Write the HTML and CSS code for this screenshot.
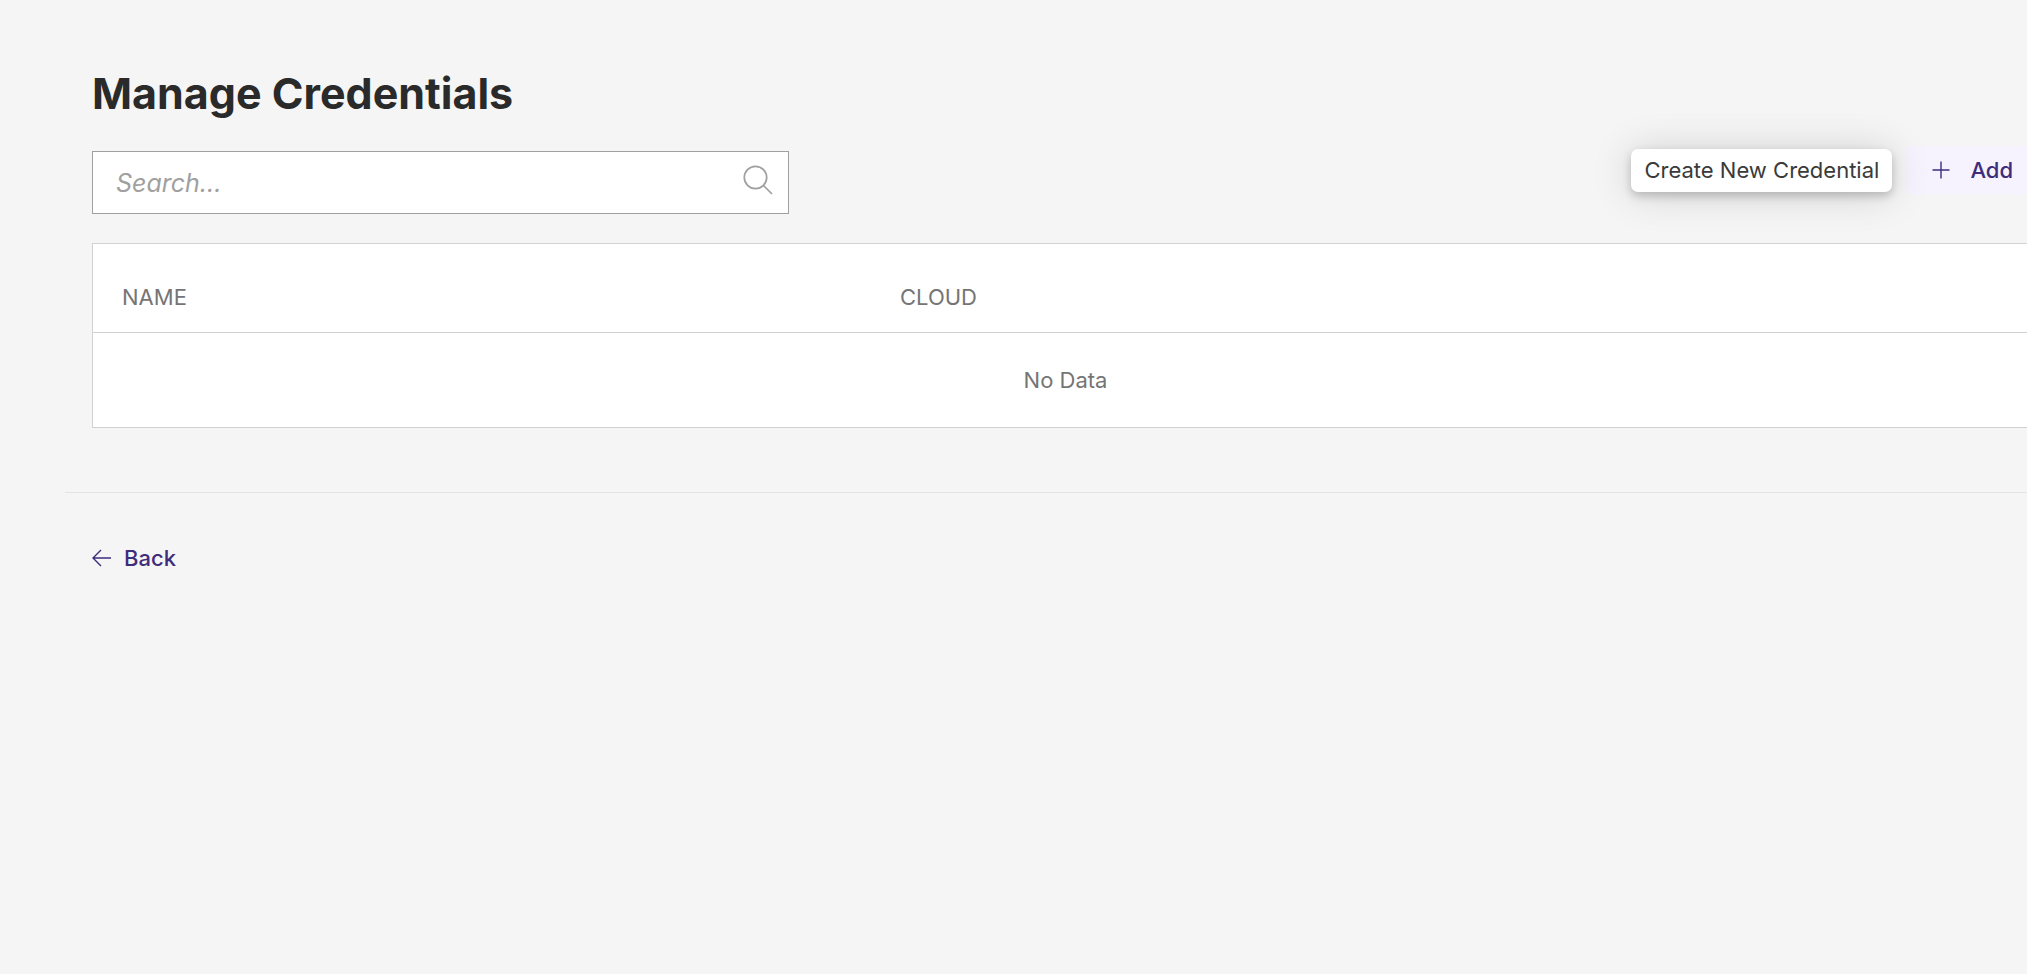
FILE: index.html
```html
<!DOCTYPE html>
<html lang="en">
<head>
<meta charset="utf-8">
<title>Manage Credentials</title>
<link rel="stylesheet" href="styles.css">
</head>
<body>
<main class="page">
  <section class="credentials">
    <h1 class="title">Manage Credentials</h1>
    <div class="toolbar">
      <div class="search">
        <input class="search-input" type="text" placeholder="Search..." aria-label="Search">
        <svg class="search-icon" viewBox="0 0 30 30" aria-hidden="true"><circle cx="12.5" cy="12.5" r="11.2"/><path d="M20.5 20.5L29 29"/></svg>
      </div>
      <div class="add-wrap">
        <button class="add" type="button" aria-describedby="add-tip">
          <svg class="add-icon" viewBox="0 0 18 18" aria-hidden="true"><path d="M9 0.5V17.5M0.5 9H17.5"/></svg>
          Add
        </button>
        <span class="tooltip" id="add-tip" role="tooltip">Create New Credential</span>
      </div>
    </div>
    <table class="table">
      <thead>
        <tr><th class="col-name" scope="col">NAME</th><th scope="col">CLOUD</th></tr>
      </thead>
      <tbody>
        <tr><td class="empty" colspan="2">No Data</td></tr>
      </tbody>
    </table>
  </section>
  <footer class="footer">
    <a class="back" href="#">
      <svg class="back-icon" viewBox="0 0 19 18" aria-hidden="true"><path d="M9 1L1 9L9 17M1 9H19"/></svg>
      Back
    </a>
  </footer>
</main>
</body>
</html>
```
FILE: styles.css
```css
* {
  box-sizing: border-box;
}

body {
  margin: 0;
  background: #f5f5f5;
  color: #2a2a2a;
  font-family: Inter, "Liberation Sans", sans-serif;
  font-size: 22px;
  line-height: 28px;
  overflow-x: hidden;
}

.page {
  margin: 0 -40px 0 65px;
}

.credentials {
  padding: 65px 28px 64px 27px;
}

.title {
  margin: 0 0 30px;
  font-size: 43px;
  font-weight: 700;
  line-height: 56px;
}

.toolbar {
  display: flex;
  justify-content: space-between;
  align-items: flex-start;
  margin-bottom: 29px;
}

.search {
  position: relative;
  width: 697px;
}

.search-input {
  display: block;
  width: 100%;
  height: 63px;
  padding: 0 64px 0 23px;
  border: 1px solid #a0a0a0;
  border-radius: 0;
  background: #fff;
  color: #2a2a2a;
  font: inherit;
  font-size: 25px;
}

.search-input::placeholder {
  color: #a0a0a0;
  font-style: italic;
  opacity: 1;
}

.search-icon {
  position: absolute;
  top: 14px;
  right: 16px;
  width: 30px;
  height: 30px;
  fill: none;
  stroke: #a0a0a0;
  stroke-width: 1.7;
}

.add-wrap {
  position: relative;
  margin-top: -5px;
}

.add {
  display: flex;
  align-items: center;
  gap: 20px;
  height: 48px;
  padding: 0 26px 0 27px;
  border: 0;
  border-radius: 5px;
  background: #f6f3ff;
  color: #3f2d7c;
  font: inherit;
  font-weight: 500;
}

.add-icon {
  width: 18px;
  height: 18px;
  fill: none;
  stroke: #3f2d7c;
  stroke-width: 1.4;
}

.tooltip {
  position: absolute;
  top: 3px;
  right: calc(100% + 13px);
  padding: 7px 13px 8px;
  border-radius: 7px;
  background: #fff;
  box-shadow: 0 4px 10px rgba(0, 0, 0, 0.2), 0 2px 40px rgba(0, 0, 0, 0.16);
  color: #3a3a3a;
  white-space: nowrap;
}

.table {
  width: 100%;
  border: 1px solid #d2d2d2;
  border-spacing: 0;
  background: #fff;
  color: #757575;
  table-layout: fixed;
}

.table th {
  padding: 39px 29px 21px;
  border-bottom: 1px solid #d2d2d2;
  font-weight: 400;
  text-align: left;
}

.table .col-name {
  width: 40%;
}

.table .empty {
  padding: 33px 29px;
  text-align: center;
}

.footer {
  padding: 51px 27px;
  border-top: 1px solid #e3e3e3;
}

.back {
  display: inline-flex;
  align-items: center;
  gap: 13px;
  color: #3f2d7c;
  font-weight: 500;
  text-decoration: none;
}

.back-icon {
  width: 19px;
  height: 18px;
  fill: none;
  stroke: #3f2d7c;
  stroke-width: 1.4;
}
```
